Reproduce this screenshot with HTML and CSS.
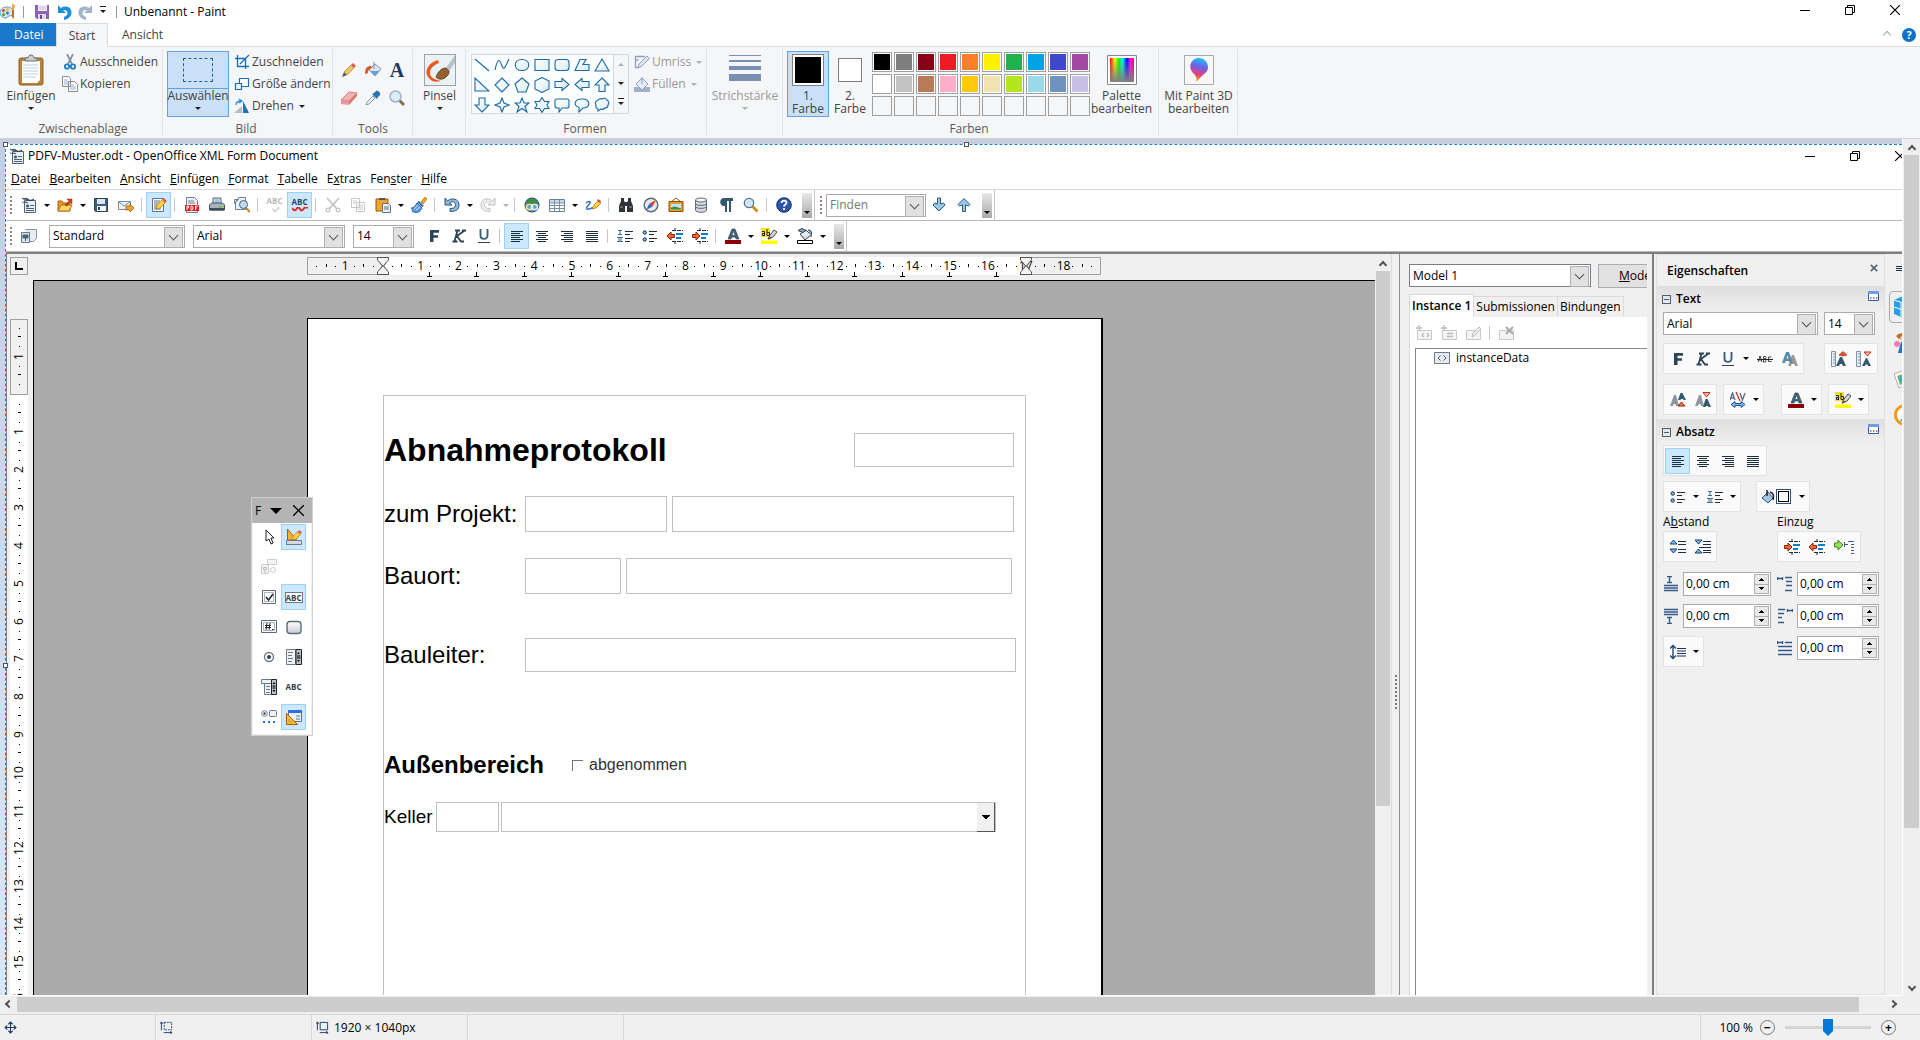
FILE: index.html
```html
<!DOCTYPE html>
<html lang="de">
<head>
  <meta charset="UTF-8">
  <meta name="viewport" content="width=device-width, initial-scale=1.0">
  <title>Unbenannt - Paint</title>
  <link rel="stylesheet" href="styles.css">
</head>
<body>
  <!-- Icon sprite -->
  <svg class="sprite" aria-hidden="true">
    <defs>
      <linearGradient id="gGrey" x1="0" y1="0" x2="0" y2="1"><stop offset="0" stop-color="#fff"/><stop offset="1" stop-color="#c5cdd6"/></linearGradient>
      <linearGradient id="gShape" x1="0" y1="0" x2="1" y2="1"><stop offset="0" stop-color="#fff"/><stop offset="1" stop-color="#d9edf2"/></linearGradient>
      <linearGradient id="gRainbow"><stop offset="0" stop-color="#f00"/><stop offset=".2" stop-color="#ff0"/><stop offset=".38" stop-color="#0f0"/><stop offset=".52" stop-color="#0ff"/><stop offset=".7" stop-color="#00f"/><stop offset=".86" stop-color="#f0f"/><stop offset="1" stop-color="#f03"/></linearGradient>
      <linearGradient id="gFade" x1="0" y1="0" x2="0" y2="1"><stop offset="0" stop-color="#808080" stop-opacity="0"/><stop offset="1" stop-color="#808080"/></linearGradient>
      <linearGradient id="gDrop" x1=".6" y1="0" x2=".4" y2="1"><stop offset="0" stop-color="#14c8f5"/><stop offset=".35" stop-color="#6b62e8"/><stop offset=".7" stop-color="#e8417c"/><stop offset="1" stop-color="#ffb400"/></linearGradient>
    </defs>
    <symbol id="palette" viewBox="0 0 16 16"><path d="M7 3C2 3 0 6 0 9s3 5 6 5c2 0 1-2 3-2 3 0 4-1 4-4S11 3 7 3z" fill="#cfe8f5" stroke="#5b9cbf"/><circle cx="3.500" cy="6.500" r="1.500" fill="#e33"/><circle cx="7.500" cy="5.500" r="1.500" fill="#fb0"/><circle cx="3.500" cy="10.500" r="1.500" fill="#3a3"/><circle cx="7.500" cy="9" r="1.500" fill="#27c"/><path d="M12 0l3 1-1 5h-2z" fill="#f4a23c"/><path d="M12 6h2v7l-1 2-1-2z" fill="#d06b1c"/></symbol>
    <symbol id="disk" viewBox="0 0 16 16"><path d="M1 1h14v14H3l-2-2z" fill="#8c62b8"/><path d="M4 1h9v6H4z" fill="#f7f2fb"/><path d="M5 3h7M5 5h7" stroke="#c9b5de"/><path d="M4 10h8v5H4z" fill="#ddd"/><path d="M6 11h2v4H6z" fill="#6b4496"/></symbol>
    <symbol id="undo" viewBox="0 0 16 16"><path d="M2 1v8h8L7.200 6.300C9.500 5.300 11.500 7 11.500 9c0 2-1.500 3-3.500 4v3c5-1 7.500-4 7.500-7.500 0-5.500-6-7.500-10.700-4.500z" fill="#1e90d8"/></symbol>
    <symbol id="redo" viewBox="0 0 16 16"><path d="M14 1v8H6l2.800-2.700C6.500 5.300 4.500 7 4.500 9c0 2 1.500 3 3.500 4v3C3 15 .5 12 .5 8.500.5 3 6.500 1 11.200 4z" fill="#a3b4cb"/></symbol>
    <symbol id="winMin" viewBox="0 0 10 10"><path d="M0 5.500h10" stroke="#000"/></symbol>
    <symbol id="winRestore" viewBox="0 0 10 10"><path d="M.5 2.500h7v7h-7zM2.500 2.500v-2h7v7h-2" fill="none" stroke="#000"/></symbol>
    <symbol id="winClose" viewBox="0 0 10 10"><path d="M0 0l10 10M10 0L0 10" stroke="currentColor" stroke-width="1.200"/></symbol>
    <symbol id="closeBold" viewBox="0 0 10 10"><path d="M1 1l8 8M9 1L1 9" stroke="#5a6a7c" stroke-width="2.200"/></symbol>
    <symbol id="paste" viewBox="0 0 26 32"><rect x="1" y="4" width="24" height="27" rx="2" fill="#b5823f" stroke="#8f6227"/><path d="M4 7h18v19l-3 3H4z" fill="#fff"/><path d="M5 11h15M5 14h15M5 17h15M5 20h15M5 23h13" stroke="#b9cfe4"/><path d="M7 7V4h3c0-4 6-4 6 0h3v3z" fill="#c9ccd0" stroke="#6d6d6d"/></symbol>
    <symbol id="scissors" viewBox="0 0 16 16"><path d="M5 0l5 10M11 0L6 10" stroke="#7d8ea0" stroke-width="1.700"/><circle cx="5" cy="12.500" r="2.200" fill="none" stroke="#1f7ec4" stroke-width="1.800"/><circle cx="11" cy="12.500" r="2.200" fill="none" stroke="#1f7ec4" stroke-width="1.800"/></symbol>
    <symbol id="pages" viewBox="0 0 16 16"><path d="M.5.500h6l2 2v8h-8zM6.500 5.500h6l3 3v7h-9z" fill="#fff" stroke="#8a8a8a"/><path d="M2 4h4M2 6h4M2 8h4M8 9h4M8 11h6M8 13h6" stroke="#8fb0d0"/></symbol>
    <symbol id="crop" viewBox="0 0 16 16"><path d="M3.500 1v11.500H15M1 4.500h10.500V15M6 10l9-9" fill="none" stroke="#1a6fb0" stroke-width="1.300"/></symbol>
    <symbol id="resize" viewBox="0 0 16 16"><path d="M5.500 2.500h9v8h-9z" fill="#fff" stroke="#1a6fb0" stroke-width="1.200"/><path d="M1.500 7.500h6v6h-6z" fill="#e8f3fa" stroke="#1a6fb0" stroke-width="1.200"/></symbol>
    <symbol id="rotate" viewBox="0 0 16 16"><path d="M0 15h8V8z" fill="#b8bcc0"/><path d="M9 15V3l6 12z" fill="#2072b4"/><path d="M2 7c0-3 2-4 5-4M5 1l3 2-3 2" fill="none" stroke="#2b8bd6" stroke-width="1.300"/></symbol>
    <symbol id="pencil" viewBox="0 0 16 16"><path d="M1 15l2-5 3 3z" fill="#555"/><path d="M3 10l7-7 3 3-7 7z" fill="#ecc668" stroke="#a87f2a" stroke-width=".7"/><path d="M10 3l2-2 3 3-2 2z" fill="#d9605a"/></symbol>
    <symbol id="bucket" viewBox="0 0 16 16"><path d="M4 8l6-6 6 5-6 7z" fill="#dbe8f3" stroke="#7c98b8"/><path d="M5.500 9h9L10 13.500z" fill="#5aa0dc"/><path d="M9 0v7" stroke="#888"/><path d="M6 4C2 4 0 6 0 12l3-1c0-3 1-4 4-5z" fill="#e8532a"/></symbol>
    <symbol id="eraser" viewBox="0 0 16 16"><path d="M0 10l8-8 8 1-8 8z" fill="#f4b1b1" stroke="#c36f6f" stroke-width=".8"/><path d="M0 10v4l8 1v-4z" fill="#e89595"/><path d="M8 11l8-8v3l-8 9z" fill="#d77777"/></symbol>
    <symbol id="dropper" viewBox="0 0 16 16"><path d="M1 15l1-3 6-6 2 2-6 6z" fill="#e5eef6" stroke="#8a98a8"/><path d="M7 4l5 5 1-2 2-2c1-2-2-5-4-4L9 3z" fill="#2672b4"/></symbol>
    <symbol id="lens" viewBox="0 0 16 16"><path d="M10 10l5 5" stroke="#8f6a4a" stroke-width="3"/><circle cx="6.500" cy="6.500" r="5.500" fill="#dcedfa" stroke="#9cb3c9" stroke-width="1.500"/></symbol>
    <symbol id="brush" viewBox="0 0 32 32"><rect x=".5" y=".5" width="31" height="31" fill="#e8f3f6" stroke="#a0a0a0"/><path d="M14 6C4 9 0 17 4 23s9 5 13 4c-5-1-11-3-11-8s4-8 9-10z" fill="#ee5a24"/><path d="M31 1l-9 13 3 3 6-8z" fill="#b9c3cd"/><path d="M22 14c-5 0-8 4-10 9 2 3 8 3 11-1 2-2 2-3 2-5z" fill="#94622f" stroke="#6e4620"/></symbol>
    <symbol id="outline" viewBox="0 0 16 16"><path d="M11 2.500H1.500v11h3M1.500 6l3 0" fill="none" stroke="#8ea0be" stroke-width="1.300"/><path d="M4 14l1-4 8-8 2.500 2.500-8 8z" fill="#dde4ef" stroke="#8ea0be"/></symbol>
    <symbol id="fill" viewBox="0 0 16 16"><path d="M0 11h16v5H0z" fill="#a0b0cb"/><path d="M2 8l6-6 6 6-6 6z" fill="#e5eaf3" stroke="#8ea0be"/><path d="M8 1v7" stroke="#8ea0be"/></symbol>
    <symbol id="rainbow" viewBox="0 0 30 30"><path d="M.5.500h29v29H.500z" fill="#fff" stroke="#888"/><path d="M3 3h24v24H3z" fill="url(#gRainbow)"/><path d="M3 3h24v24H3z" fill="url(#gFade)"/></symbol>
    <symbol id="paint3d" viewBox="0 0 30 30"><path d="M.5.500h29v29H.500z" fill="#f7f7f7" stroke="#aaa"/><path d="M15 3c5 0 9 4 9 9 0 6-5 7-8 11l-4 4c1-4 0-6-3-9-6-7-1-15 6-15z" fill="url(#gDrop)"/></symbol>
    <symbol id="move" viewBox="0 0 12 12"><path d="M6 1v10M1 6h10M4 3l2-2 2 2M4 9l2 2 2-2M3 4L1 6l2 2M9 4l2 2-2 2" fill="none" stroke="#1d3c66"/></symbol>
    <symbol id="selSize" viewBox="0 0 14 14"><path d="M4.500 1.500h8v8h-8z" fill="none" stroke="#1d3c66" stroke-dasharray="2 1"/><path d="M1.500 10V1M0 3l1.500-2L3 3M4 12.500h9M11 11l2 1.500-2 1.500" fill="none" stroke="#1d3c66"/></symbol>
    <symbol id="imgSize" viewBox="0 0 14 14"><path d="M4.500 1.500h8v8h-8z" fill="#e8f3fa" stroke="#1d3c66"/><path d="M1.500 10V1M0 3l1.500-2L3 3M4 12.500h9M11 11l2 1.500-2 1.500" fill="none" stroke="#1d3c66"/></symbol>

    <!-- Writer -->
    <symbol id="xdoc" viewBox="0 0 16 16"><path d="M3.500 3.500h11v12h-11z" fill="#e9f0f5" stroke="#4c6377"/><path d="M1 1c2 2 4-1 6 1s4 1 6 0c-2 2-4 2-6 1S3 3 1 1zM1 5c2 1 4-1 6 1" fill="#2d4454" stroke="#2d4454" stroke-width=".8"/><path d="M5.500 8h2v2h-2zM9 8.500h4M5 11.500h8M5 13.500h8" fill="#4c6377" stroke="#4c6377"/></symbol>
    <symbol id="open" viewBox="0 0 16 16"><path d="M1 14V4h4l1 2h7v8z" fill="#e8972a" stroke="#a85e10"/><path d="M1 14l3-6h11l-3 6z" fill="#ffd566" stroke="#b8720e"/><path d="M8 8l4-4-2-2h5v5l-2-2-3 4z" fill="#d8401c" stroke="#8e2108" stroke-width=".5"/></symbol>
    <symbol id="save" viewBox="0 0 16 16"><path d="M1.500 1.500h13v13h-12l-1-1z" fill="#3e5f80" stroke="#2d4454"/><path d="M4 2h8v5H4z" fill="#d7e6f2"/><path d="M4 9h9v5H4z" fill="#f4f8fb"/><path d="M5 10h2v3H5z" fill="#2d4454"/></symbol>
    <symbol id="mail" viewBox="0 0 16 16"><path d="M.5 4.500h12v8H.500z" fill="#e8eff5" stroke="#7b8b9a"/><path d="M1 5l5 4 6-4" fill="none" stroke="#7b8b9a"/><path d="M8 9h4V7l4 4-4 4v-2H8z" fill="#f4a524" stroke="#8d5108" stroke-width=".7"/></symbol>
    <symbol id="edit" viewBox="0 0 16 16"><path d="M1.500 1.500h11v13h-11z" fill="#f8fafc" stroke="#5c7388"/><path d="M3 4h6M3 6h5M3 8h4M3 10h3M3 12h7" stroke="#5c7388"/><path d="M5 12l1-4 6-6 3 3-6 6z" fill="#ffd23f" stroke="#a56a08" stroke-width=".7"/><path d="M11 3l2-2 3 3-2 2z" fill="#e45c5c"/></symbol>
    <symbol id="pdf" viewBox="0 0 16 16"><path d="M2.500.500h8l3 3v12h-11z" fill="#eef3f7" stroke="#6c8193"/><path d="M4 4h6M4 6h7" stroke="#6c8193"/><path d="M1 8h14v6H1z" fill="#e01f1f"/><path d="M3 13V9h1.500v2H3M7 9v4h1l1-1v-2L8 9zM11.500 13V9H14M11.500 11H13" fill="none" stroke="#fff" stroke-width=".9"/></symbol>
    <symbol id="print" viewBox="0 0 16 16"><path d="M4 7V1h8v6" fill="#e7f1f8" stroke="#4c6377"/><path d="M5.500 3h5M5.500 5h5" stroke="#6b94b8"/><path d="M.5 8l2-2h11l2 2v5H.500z" fill="#a8b3bd" stroke="#3f4f5c"/><path d="M1 11h14v2.500H1z" fill="#3f4f5c"/><path d="M10 10h3" stroke="#56d22e" stroke-width="1.500"/></symbol>
    <symbol id="preview" viewBox="0 0 16 16"><path d="M.5 2.500h4l-4 4zM4.500.500h7v12h-10v-7z" fill="#eaf1f7" stroke="#6c8193"/><path d="M12 11l4 4" stroke="#c8821a" stroke-width="2.200"/><circle cx="9.500" cy="7.500" r="4" fill="#bfdcf2" stroke="#4c6377"/></symbol>
    <symbol id="spell" viewBox="0 0 16 16"><path d="M4 9l4 5 7-7" fill="none" stroke="#bbb" stroke-width="2.400"/><path d="M4 9l4 5 7-7" fill="none" stroke="#fff"/></symbol>
    <symbol id="wave" viewBox="0 0 16 5"><path d="M0 1q2.500 4 4.500 1t3.500 0 3.500 0T16 1" fill="none" stroke="#dd2b20" stroke-width="2"/></symbol>
    <symbol id="cutGrey" viewBox="0 0 16 16"><path d="M2 1l10 11M14 1L4 12" stroke="#c4c4c4" stroke-width="1.800"/><circle cx="3" cy="13" r="1.800" fill="none" stroke="#c4c4c4" stroke-width="1.300"/><circle cx="13" cy="13" r="1.800" fill="none" stroke="#c4c4c4" stroke-width="1.300"/></symbol>
    <symbol id="copyGrey" viewBox="0 0 16 16"><path d="M1.500 1.500h8v9h-8zM6.500 5.500h8v9h-8z" fill="#fff" stroke="#c8c8c8"/><path d="M3 4h4M3 6h3M8 8h5M8 10h5M8 12h5" stroke="#c8c8c8"/></symbol>
    <symbol id="clip" viewBox="0 0 16 16"><path d="M1 2h12v12H1z" fill="#f0a530" stroke="#8d5a10"/><path d="M4 3V1h6v2z" fill="#555"/><path d="M7.500 6.500h6l2 2v7h-8z" fill="#eaf1f7" stroke="#5c7388"/><path d="M9 10h5M9 12h5" stroke="#5c7388"/></symbol>
    <symbol id="format" viewBox="0 0 16 16"><path d="M10 5l4-5 2 2-4 5z" fill="#f4a524" stroke="#8d5108" stroke-width=".6"/><path d="M6 6l5 5-2 3c-2 2-6 2-8 0l1-2-2-1c3 0 4-2 6-5z" fill="#5d9ee6" stroke="#1f4f96" stroke-width=".8"/><path d="M7 4.500l5 5" stroke="#2f64a8" stroke-width="2"/><path d="M3 12l4-4M5 13l4-3" stroke="#cfe3fa" stroke-width=".8"/></symbol>
    <symbol id="undoO" viewBox="0 0 16 16"><path d="M1 1v7h7L5.500 6C8 3.500 12 5 11.500 8.500 11 11 9 11.500 6 11.500v3c6 0 9-2 9-6.500C15 2 8 0 3.500 4z" fill="#8fbcdc" stroke="#2b5478"/></symbol>
    <symbol id="redoO" viewBox="0 0 16 16"><path d="M15 1v7H8l2.500-2C8 3.500 4 5 4.500 8.500 5 11 7 11.500 10 11.500v3C4 14.500 1 12.500 1 8 1 2 8 0 12.500 4z" fill="#eee" stroke="#c4c4c4"/></symbol>
    <symbol id="globe" viewBox="0 0 16 16"><circle cx="8" cy="8" r="7" fill="#5b9fd8" stroke="#1d3d5c"/><path d="M3 3q5-3 10 0l1 5-6 1-6-1z" fill="#3f8a4a"/><rect x="2.500" y="7.500" width="6" height="5" rx="2.500" fill="none" stroke="#f4e27a" stroke-width="1.600"/><rect x="7.500" y="7.500" width="6" height="5" rx="2.500" fill="none" stroke="#e8f0f5" stroke-width="1.600"/></symbol>
    <symbol id="table" viewBox="0 0 16 16"><path d="M.5 2.500h15v12H.500z" fill="#fff" stroke="#6c8193"/><path d="M1 3h14v3H1z" fill="#c6d9ea"/><path d="M.5 6h15M.5 8.500h15M.5 11.500h15M5.500 3v11M10.500 3v11" stroke="#7690a8"/></symbol>
    <symbol id="draw" viewBox="0 0 16 16"><path d="M1 6c2-2 5-2 4 0s-5 5-3 6 5-2 7-1" fill="none" stroke="#2874d0" stroke-width="1.500"/><path d="M7 12l2-4 4-4 3 2-5 5z" fill="#ffd23f" stroke="#a56a08" stroke-width=".7"/><path d="M12 4l1-2 3 2-1 2z" fill="#e04a3a"/></symbol>
    <symbol id="find" viewBox="0 0 16 16"><path d="M3 1h3v3l1 1h2l1-1V1h3v3l2 5v6H9V9H7v6H1V9l2-5z" fill="#2e3439"/><path d="M2 10h3M11 10h3" stroke="#99a"/></symbol>
    <symbol id="compass" viewBox="0 0 16 16"><circle cx="8" cy="8" r="6.800" fill="#e5eef5" stroke="#5c6c7a" stroke-width="1.500"/><path d="M13 3L9.500 9.500l-3-3z" fill="#e23b1e"/><path d="M3 13l3.500-6.500 3 3z" fill="#2f64c0"/></symbol>
    <symbol id="gallery" viewBox="0 0 16 16"><path d="M3 5l5-4 5 4" fill="none" stroke="#8d5a10"/><path d="M1 4.500h14v10H1z" fill="#e79a2e" stroke="#8d4a08"/><path d="M3 7h10v5.500H3z" fill="#bfe3f7"/><path d="M3 12.500v-2l4-1 6 2v1z" fill="#3c9132"/></symbol>
    <symbol id="db" viewBox="0 0 16 16"><path d="M2.500 3v10c0 3 11 3 11 0V3" fill="#d6dbe0" stroke="#5f6b76"/><ellipse cx="8" cy="3" rx="5.500" ry="2" fill="#f3f5f7" stroke="#5f6b76"/><path d="M2.500 6.500c0 2.500 11 2.500 11 0M2.500 9.500c0 2.500 11 2.500 11 0" fill="none" stroke="#5f6b76"/></symbol>
    <symbol id="pilcrow" viewBox="0 0 16 16"><path d="M15 1H6C1 1 1 9 6 9h1v6h2V4h2v11h2V4h2z" fill="#34586f"/></symbol>
    <symbol id="zoomO" viewBox="0 0 16 16"><path d="M9.500 9.500l5 5" stroke="#d48a1d" stroke-width="2.800"/><circle cx="6" cy="6" r="4.700" fill="#cfe6f7" stroke="#54728c" stroke-width="1.300"/></symbol>
    <symbol id="help" viewBox="0 0 16 16"><circle cx="8" cy="8" r="7.300" fill="#2c56a8" stroke="#16306b"/><path d="M5.500 6c0-3.500 5.500-3 5 0C10.300 7.500 8 7.500 8 9.500M8 11v2" fill="none" stroke="#fff" stroke-width="1.800"/></symbol>
    <symbol id="down" viewBox="0 0 14 16"><path d="M5.500 1h3v6l3-1 1.500 2-6 6-6-6L2.500 6l3 1z" fill="#9cc8e8" stroke="#2d5878"/></symbol>
    <symbol id="up" viewBox="0 0 14 16"><path d="M5.500 14.500h3V8l3 1L13 7.500l-6-6-6 6L2.500 9l3-1z" fill="#9cc8e8" stroke="#2d5878"/></symbol>
    <symbol id="styles" viewBox="0 0 16 16"><path d="M4.500 1.500h11v9l-3 3h-4" fill="#e6ebf0" stroke="#8793a0"/><path d="M.5 4.500h8v10h-8z" fill="#dbe4ec" stroke="#66788a"/><path d="M2 7h5v3H2zM4.500 9v4" fill="#4c6377" stroke="#4c6377"/></symbol>
    <symbol id="bold" viewBox="0 0 16 16"><path d="M4 2h9v2.700H7.500v2.500h4.500v2.600H7.500V14H4z" fill="#2d4454"/></symbol>
    <symbol id="italic" viewBox="0 0 16 16"><path d="M4 2.500h5M6.500 2.500L3.500 13.500M1.500 13.500h5M13.500 2.500L6 8l4 5.500h3M11 2.500h4" fill="none" stroke="#2d4454" stroke-width="1.800"/></symbol>
    <symbol id="under" viewBox="0 0 16 16"><path d="M4.500 1v6.500c0 4.500 7 4.500 7 0V1" fill="none" stroke="#3d6079" stroke-width="1.900"/><path d="M2 14.500h12" stroke="#2d4454"/></symbol>
    <symbol id="alLeft" viewBox="0 0 16 16"><path d="M2 3.500h12M2 5.500h9M2 7.500h12M2 9.500h9M2 11.500h12M2 13.500h9" stroke="#1c2f3d"/></symbol>
    <symbol id="alCenter" viewBox="0 0 16 16"><path d="M2 3.500h12M4 5.500h8M2 7.500h12M4 9.500h8M2 11.500h12M4 13.500h8" stroke="#1c2f3d"/></symbol>
    <symbol id="alRight" viewBox="0 0 16 16"><path d="M2 3.500h12M5 5.500h9M2 7.500h12M5 9.500h9M2 11.500h12M5 13.500h9" stroke="#1c2f3d"/></symbol>
    <symbol id="alFull" viewBox="0 0 16 16"><path d="M2 3.500h12M2 5.500h12M2 7.500h12M2 9.500h12M2 11.500h12M2 13.500h12" stroke="#1c2f3d"/></symbol>
    <symbol id="numList" viewBox="0 0 16 16"><path d="M1 2.500h4M3 2v4M1 6.500h4M0 9.500h6M0 13.500h6M2 10v3M4 10v3" stroke="#3d7090"/><path d="M8 3.500h8M8 6.500h5M8 10.500h8M8 13.500h5" stroke="#1c2f3d"/></symbol>
    <symbol id="bulList" viewBox="0 0 16 16"><circle cx="2.700" cy="4.500" r="1.700" fill="#7db6dc" stroke="#1c2f3d"/><circle cx="2.700" cy="11.500" r="1.700" fill="#7db6dc" stroke="#1c2f3d"/><path d="M7 3.500h8M7 6.500h5M7 10.500h8M7 13.500h5" stroke="#1c2f3d"/></symbol>
    <symbol id="outdent" viewBox="0 0 16 16"><path d="M5 2.500h11M8 0v3M8 13v3M5 13.500h11" stroke="#1c2f3d" stroke-dasharray="4 1"/><path d="M9 6h7M9 10h5" stroke="#0b7cc8" stroke-width="2"/><path d="M0 8l4-4v2.500h3.500v3H4V12z" fill="#f0693a" stroke="#8e2108"/></symbol>
    <symbol id="indent" viewBox="0 0 16 16"><path d="M5 2.500h11M8 0v3M8 13v3M5 13.500h11" stroke="#1c2f3d" stroke-dasharray="4 1"/><path d="M9 6h7M9 10h5" stroke="#0b7cc8" stroke-width="2"/><path d="M8 8L4 4v2.500H.5v3H4V12z" fill="#f0693a" stroke="#8e2108"/></symbol>
    <symbol id="fontColor" viewBox="0 0 16 16"><path d="M3 11L7 1h3l4 10h-3l-.6-2H6.800L6 11z" fill="#41647d" stroke="#22394a" stroke-width=".6"/><path d="M7.500 7L8.500 4l1 3z" fill="#fff"/><path d="M0 12h16v4H0z" fill="#8b0000"/></symbol>
    <symbol id="marker" viewBox="0 0 16 16"><path d="M0 0h9v9H0z" fill="#ffe11a"/><path d="M0 12.500h16V16H0z" fill="#ff0"/><path d="M1 3.500h2.500V8M3.500 5.500H1.500V7.500h2M6 1v6.500h2.500v-3H6" fill="none" stroke="#222"/><path d="M7 11l2-4 4-5 3 2-4 5z" fill="#d5d9dd" stroke="#444"/><path d="M7 12l1.500-3.500L11 10z" fill="#7b5c1a"/></symbol>
    <symbol id="bgColor" viewBox="0 0 16 16"><path d="M3 6l6-4 5 5-6 5z" fill="url(#gGrey)" stroke="#2f4250"/><path d="M11 2c4 0 4 3 3 7M1 2.500l4-2 4 2-3 2z" fill="#9aa7b2" stroke="#2f4250"/><path d="M.5 12.500h15v3H.500z" fill="#fff" stroke="#000"/></symbol>
    <symbol id="strike" viewBox="0 0 16 16"><path d="M1 11l2-6 2 6M2 9h2M6.500 5.500h2l.5 1-.5 1.500H6.500h2L9 9.500l-.5 1.500h-2zM14.500 6h-3v4.500h3" fill="none" stroke="#444"/><path d="M0 8.500h16" stroke="#222"/></symbol>
    <symbol id="shadow" viewBox="0 0 16 16"><path d="M6 15l4-11h2l4 11h-3l-.5-2h-3l-.5 2z" fill="#9a9a9a"/><path d="M0 12L4 1h3l4 11H8l-.6-2H3.600L3 12z" fill="#5c8aaa"/><path d="M4.500 7.500l1-3 1 3z" fill="#fff"/></symbol>
    <symbol id="grow" viewBox="0 0 16 16"><path d="M.5.500h4v15h-4zM2 3h2M2 6h2M2 9h2M2 12h2" fill="#e9eff4" stroke="#7c92a6"/><path d="M5 15l4-9h2l4 9h-3l-1-2H9l-1 2z" fill="#34586f"/><path d="M8 4l4-3.500L16 4l-4 1z" fill="#f05030" stroke="#8e2108" stroke-width=".6"/></symbol>
    <symbol id="shrink" viewBox="0 0 16 16"><path d="M.5.500h4v15h-4zM2 3h2M2 6h2M2 9h2M2 12h2" fill="#e9eff4" stroke="#7c92a6"/><path d="M6 15l4-8h1l4 8h-3l-.5-1.500h-2L9 15z" fill="#34586f"/><path d="M8 1h7l-3.500 4z" fill="#fbb" stroke="#c03010"/></symbol>
    <symbol id="super" viewBox="0 0 16 16"><path d="M0 14L4 3h2l3 11H6l-.5-2h-2L3 14z" fill="#8e979f"/><path d="M8 8l2.500-7h2L16 8h-2.500l-.5-1h-2l-.5 1z" fill="#34586f"/><path d="M8 14l3.500-4 3.500 4z" fill="#f08050" stroke="#8e2108"/></symbol>
    <symbol id="sub" viewBox="0 0 16 16"><path d="M0 14L4 3h2l3 11H6l-.5-2h-2L3 14z" fill="#8e979f"/><path d="M8 15l2.500-8h2l3.500 8h-2.500l-.5-1h-2l-.5 1z" fill="#34586f"/><path d="M8 .5h7L11.500 5z" fill="#fbb" stroke="#c03010"/></symbol>
    <symbol id="spacing" viewBox="0 0 16 16"><path d="M0 8l2.500-7L5 8M1 6h3M10 1l2.500 7L15 1" fill="none" stroke="#5c7388" stroke-width="1.400"/><path d="M6 0l4 9" stroke="#d22" stroke-width="1.200"/><path d="M1 12.500l4-3v2h6v-2l4 3-4 3v-2H5v2z" fill="#7db6ec" stroke="#1f5a96"/></symbol>
    <symbol id="dialog" viewBox="0 0 11 10"><path d="M.5.500h10v9H.500z" fill="#fff" stroke="#2a5db0"/><path d="M0 0h11v3H0z" fill="#6f9be0"/><path d="M2 7h1.500M5 7h1.500M8 7h1.500" stroke="#222"/></symbol>
    <symbol id="spaceUp" viewBox="0 0 16 16"><path d="M0 5l3.500-4L7 5zM0 10h7l-3.500 4z" fill="#7db6ec" stroke="#1c3f66"/><path d="M8 2.500h8M8 5.500h8M8 10.500h8M8 13.500h8" stroke="#1c2f3d"/></symbol>
    <symbol id="spaceDown" viewBox="0 0 16 16"><path d="M0 1h7L3.500 5zM0 14l3.500-4L7 14z" fill="#7db6ec" stroke="#1c3f66"/><path d="M8 2.500h8M8 5.500h8M4 8.500h12M8 11.500h8M8 13.500h8" stroke="#1c2f3d"/></symbol>
    <symbol id="hanging" viewBox="0 0 20 16"><path d="M.5 4H4V1l5 5-5 5V8H.500z" fill="#9be05a" stroke="#3c8a1a"/><path d="M10 5.500h4M10.500 3v5M14 2.500h6M17 5.500h3M17 8.500h3M17 11.500h3M17 14.500h3" stroke="#3d5a8a"/></symbol>
    <symbol id="above" viewBox="0 0 16 16"><path d="M4 .5h5M6.500 0v6M4 6.500h5M1 9.500h14M1 12h14M1 14.500h14" stroke="#36598a" stroke-width="1.400"/></symbol>
    <symbol id="below" viewBox="0 0 16 16"><path d="M1 1.500h14M1 4h14M1 6.500h14M4 9.500h5M6.500 9v6M4 15.500h5" stroke="#36598a" stroke-width="1.400"/></symbol>
    <symbol id="before" viewBox="0 0 16 16"><path d="M0 2.500h6M.5 1v3M5.500 1v3M8 1.500h7M9 5.500h6M9 9.500h6M8 14.500h7" stroke="#36598a" stroke-width="1.400"/></symbol>
    <symbol id="after" viewBox="0 0 16 16"><path d="M10 2.500h6M10.500 1v3M15.500 1v3M1 1.500h7M1 5.500h6M1 9.500h4M1 14.500h6" stroke="#36598a" stroke-width="1.400"/></symbol>
    <symbol id="first" viewBox="0 0 16 16"><path d="M0 2.500h5M.5 1v3M5.500 1v3M8 2.500h7M1 6.500h14M1 10.500h14M1 14.500h14" stroke="#36598a" stroke-width="1.400"/></symbol>
    <symbol id="lineSp" viewBox="0 0 16 16"><path d="M3 2v12M0 4.500l3-3 3 3M0 11.500l3 3 3-3" fill="none" stroke="#25486e" stroke-width="1.400"/><path d="M7 4.500h9M7 7h9M7 9.500h9M7 12h9" stroke="#1c2f5d"/></symbol>
    <symbol id="bucketO" viewBox="0 0 14 16"><path d="M1 9l6-6 5 6-5 5z" fill="#a6c4e6" stroke="#33547a"/><path d="M9 3c4 1 4 5 3 8M6 1v6" fill="none" stroke="#222" stroke-width="1.500"/></symbol>
    <symbol id="xmlTag" viewBox="0 0 16 12"><path d="M.5.500h15v11H.500z" fill="#e5ebf0" stroke="#6c7a88"/><path d="M6.500 3.500L4 6l2.500 2.500M9.500 3.500L12 6 9.500 8.500" fill="none" stroke="#4c5a68"/></symbol>
    <symbol id="addElem" viewBox="0 0 16 16"><path d="M1.500 5.500h14v9h-14z" fill="#f4f4f4" stroke="#c8c8c8"/><path d="M3 0v6M0 3h6M8 8l-2 2 2 2M11 8l2 2-2 2" fill="none" stroke="#bbb" stroke-width="1.300"/></symbol>
    <symbol id="addAttr" viewBox="0 0 16 16"><path d="M1.500 5.500h14v9h-14z" fill="#f4f4f4" stroke="#c8c8c8"/><path d="M3 0v6M0 3h6M6 8.500h6M6 11.500h6" stroke="#bbb" stroke-width="1.300"/></symbol>
    <symbol id="editGrey" viewBox="0 0 16 16"><path d="M.5 5.500h14v9H.500z" fill="#f4f4f4" stroke="#c8c8c8"/><path d="M6 12l1-4 6-6 2 2-6 6z" fill="#eee" stroke="#bbb"/></symbol>
    <symbol id="delGrey" viewBox="0 0 16 16"><path d="M.5 5.500h14v9H.500z" fill="#f4f4f4" stroke="#c8c8c8"/><path d="M7 2l7 7M14 2L7 9" stroke="#aaa" stroke-width="2"/></symbol>
    <symbol id="cube" viewBox="0 0 20 24"><path d="M0 5l9-4 10 4v14l-10 4-9-4z" fill="#2a9df0"/><path d="M7 12l12 3v4l-10 4-2-1z" fill="#59c832"/><path d="M0 12l9 3M7 8v14M0 5l9 3" stroke="#fff"/></symbol>
    <symbol id="person" viewBox="0 0 20 24"><path d="M2 5q6-6 12 0l-1 3H5z" fill="#c66a22"/><circle cx="9" cy="8" r="3" fill="#fbd3b0"/><path d="M4 22l3-11h6l3 11z" fill="#2470c8"/><circle cx="3" cy="13" r="3" fill="#f57ab8"/></symbol>
    <symbol id="photos" viewBox="0 0 20 24"><path d="M0 7l13-5 5 14-13 5z" fill="#fff" stroke="#aaa"/><path d="M3 9l9-3 3 9-9 3z" fill="#6cc24a"/><circle cx="9" cy="12" r="4" fill="#4aa3e0"/></symbol>
    <symbol id="navi" viewBox="0 0 20 24"><circle cx="11" cy="12" r="9.500" fill="#fff" stroke="#f29a1f" stroke-width="3"/><path d="M16 5l-2 11-9 3z" fill="#4a8fd8"/></symbol>

    <!-- Form controls palette -->
    <symbol id="cursor" viewBox="0 0 16 16"><path d="M5 1v11l3-2 2 5 2-1-2-5h3z" fill="#fff" stroke="#222"/></symbol>
    <symbol id="design" viewBox="0 0 16 16"><path d="M1.500 0l9 11h-9z" fill="#f9b233" stroke="#a35f08"/><path d="M.5 11.500h15v4H.500z" fill="#d5dae0" stroke="#6c7a88"/><path d="M5.500 11l2-4 4-4 3 2-4 5z" fill="#ffd23f" stroke="#a56a08" stroke-width=".7"/><path d="M11.500 3l1.500-2 3 2-1.500 2z" fill="#e45c5c"/></symbol>
    <symbol id="ctlGrey" viewBox="0 0 16 16"><path d="M6.500.500h9v5h-9zM.5 5.500h7v9h-7z" fill="#f4f4f4" stroke="#ccc"/><path d="M2.500 8.500h3v2h-3zM4 11v3" fill="none" stroke="#bbb"/><circle cx="12" cy="11" r="2.500" fill="none" stroke="#ccc"/></symbol>
    <symbol id="check" viewBox="0 0 16 16"><path d="M1.500 1.500h13v13h-13z" fill="#fff" stroke="#5c6c7a"/><path d="M3.500 3.500h9v9h-9z" fill="#fff" stroke="#a9b4bf"/><path d="M5 8l2.500 3L12 5" fill="none" stroke="#222" stroke-width="1.500"/></symbol>
    <symbol id="numField" viewBox="0 0 16 16"><path d="M.5 1.500h15v12H.500z" fill="#fff" stroke="#5c6c7a"/><path d="M2.500 3.500h11v8h-11z" fill="#fff" stroke="#a9b4bf"/><path d="M6 4l-1 7M9 4L8 11M4 6.500h6M4 8.500h6M11 10.500h1.500" stroke="#222"/></symbol>
    <symbol id="btn" viewBox="0 0 16 16"><rect x="1" y="2.500" width="14" height="12" rx="3" fill="url(#gGrey)" stroke="#5c6c7a" stroke-width="1.400"/></symbol>
    <symbol id="radio" viewBox="0 0 16 16"><circle cx="8" cy="8" r="4.500" fill="#fff" stroke="#6c7a88" stroke-width="1.400"/><circle cx="8" cy="8" r="2" fill="#2d4454"/></symbol>
    <symbol id="listBox" viewBox="0 0 16 16"><path d="M.5.500h9v15h-9z" fill="#eef2f5" stroke="#6c7a88"/><path d="M2 3.500h5M2 6.500h4M2 9.500h5M2 12.500h4" stroke="#6c7a88"/><path d="M10 .5h5.500v15H10z" fill="#bbc3cb" stroke="#222"/><path d="M11 5l1.500-2L14 5zM11 11l1.500 2 1.500-2z"/><path d="M11 6h3.500v4H11z" fill="#555"/></symbol>
    <symbol id="comboBox" viewBox="0 0 16 16"><path d="M.5.500h10v4H.500zM3.500 4.500h8v11h-8z" fill="#eef2f5" stroke="#6c7a88"/><path d="M5 7.500h4M5 10.500h4M5 13.500h4" stroke="#6c7a88"/><path d="M10.500.500h5v15h-5z" fill="#bbc3cb" stroke="#222"/><path d="M11.500 5L13 3l1.500 2zM11.500 11l1.500 2 1.500-2z"/><path d="M11.500 6h3v4h-3z" fill="#555"/></symbol>
    <symbol id="moreCtl" viewBox="0 0 16 16"><circle cx="3.500" cy="4.500" r="2.800" fill="#fff" stroke="#6c7a88"/><circle cx="3.500" cy="4.500" r="1.200" fill="#2d4454"/><rect x="8.500" y="1.500" width="7" height="6" rx="1" fill="#eef2f5" stroke="#6c7a88"/><path d="M2 13h2M7 13h2M12 13h2" stroke="#2a6cf0" stroke-width="2"/></symbol>
    <symbol id="formDesign" viewBox="0 0 16 16"><path d="M2.500 1.500h13v11h-13z" fill="#eaf1f7" stroke="#5c7388"/><path d="M2 1h14v3H2z" fill="#2f6fe0"/><path d="M10 7h4M10 10h4" stroke="#5c7388"/><path d="M.5 4.500l11 11H.500z" fill="#ffc02e" stroke="#a35f08"/><path d="M3 10.500l2.500 2.500H3z" fill="#fff" stroke="#a35f08" stroke-width=".6"/></symbol>
  </svg>

  <div class="paint">
    <header class="titlebar">
      <svg class="icon"><use href="#palette"/></svg>
      <span class="tsep"></span>
      <button title="Speichern"><svg class="icon"><use href="#disk"/></svg></button>
      <button title="Rückgängig"><svg class="icon"><use href="#undo"/></svg></button>
      <button title="Wiederholen"><svg class="icon"><use href="#redo"/></svg></button>
      <button class="customize" title="Symbolleiste anpassen"><span class="caret"></span></button>
      <span class="tsep"></span>
      <h1>Unbenannt - Paint</h1>
      <div class="winbuttons">
        <button title="Minimieren"><svg><use href="#winMin"/></svg></button>
        <button title="Verkleinern"><svg><use href="#winRestore"/></svg></button>
        <button title="Schließen"><svg><use href="#winClose"/></svg></button>
      </div>
    </header>

    <nav class="tabs">
      <button class="tab file">Datei</button>
      <button class="tab current">Start</button>
      <button class="tab">Ansicht</button>
      <div class="tabs-right">
        <span class="chev up"></span>
        <button class="helpbtn" title="Hilfe">?</button>
      </div>
    </nav>

    <section class="ribbon">
      <div class="group clipboard">
        <div class="group-body">
          <button class="big"><svg class="paste-icon"><use href="#paste"/></svg><span>Einfügen</span><i class="caret"></i></button>
          <div class="stack">
            <button class="small"><svg class="icon"><use href="#scissors"/></svg>Ausschneiden</button>
            <button class="small"><svg class="icon"><use href="#pages"/></svg>Kopieren</button>
          </div>
        </div>
        <div class="group-name">Zwischenablage</div>
      </div>

      <div class="group image">
        <div class="group-body">
          <button class="big selected split"><span class="marquee"></span><span>Auswählen</span><i class="caret"></i></button>
          <div class="stack">
            <button class="small"><svg class="icon"><use href="#crop"/></svg>Zuschneiden</button>
            <button class="small"><svg class="icon"><use href="#resize"/></svg>Größe ändern</button>
            <button class="small"><svg class="icon"><use href="#rotate"/></svg>Drehen <i class="caret"></i></button>
          </div>
        </div>
        <div class="group-name">Bild</div>
      </div>

      <div class="group tools">
        <div class="tool-grid">
          <button title="Stift"><svg class="icon"><use href="#pencil"/></svg></button>
          <button title="Füllung"><svg class="icon"><use href="#bucket"/></svg></button>
          <button title="Text" class="letter">A</button>
          <button title="Radierer"><svg class="icon"><use href="#eraser"/></svg></button>
          <button title="Farbauswahl"><svg class="icon"><use href="#dropper"/></svg></button>
          <button title="Lupe"><svg class="icon"><use href="#lens"/></svg></button>
        </div>
        <div class="group-name">Tools</div>
      </div>

      <div class="group brushes">
        <div class="group-body">
          <button class="big"><svg class="big-icon"><use href="#brush"/></svg><span>Pinsel</span><i class="caret"></i></button>
        </div>
      </div>

      <div class="group shapes">
        <div class="group-body">
          <div class="gallery">
            <div class="shape-grid" id="shapeGrid"></div>
            <div class="gallery-scroll">
              <button title="Nach oben"><i class="caret flip dim"></i></button>
              <button title="Nach unten"><i class="caret"></i></button>
              <button title="Mehr"><i class="caret bar"></i></button>
            </div>
          </div>
          <div class="stack">
            <button class="small disabled"><svg class="icon"><use href="#outline"/></svg>Umriss <i class="caret dim"></i></button>
            <button class="small disabled"><svg class="icon"><use href="#fill"/></svg>Füllen <i class="caret dim"></i></button>
          </div>
        </div>
        <div class="group-name">Formen</div>
      </div>

      <div class="group stroke">
        <div class="group-body">
          <button class="big disabled"><span class="lines"><i></i><i></i><i></i><i></i></span><span>Strichstärke</span><i class="caret dim"></i></button>
        </div>
      </div>

      <div class="group colors">
        <div class="group-body">
          <button class="big selected color-slot"><span class="slot first"></span><span>1.<br>Farbe</span></button>
          <button class="big color-slot"><span class="slot second"></span><span>2.<br>Farbe</span></button>
          <div class="swatches" id="swatches"></div>
          <button class="big"><svg class="pal-icon"><use href="#rainbow"/></svg><span>Palette<br>bearbeiten</span></button>
        </div>
        <div class="group-name">Farben</div>
      </div>

      <div class="group paint3d">
        <div class="group-body">
          <button class="big"><svg class="pal-icon"><use href="#paint3d"/></svg><span>Mit Paint 3D<br>bearbeiten</span></button>
        </div>
      </div>
    </section>

    <main class="workarea">
      <div class="canvas">
        <span class="handle corner"></span><span class="handle top"></span><span class="handle left"></span>

        <div class="office">
          <div class="otitle">
            <svg class="icon"><use href="#xdoc"/></svg>
            <span>PDFV-Muster.odt - OpenOffice XML Form Document</span>
            <div class="winbuttons">
              <button title="Minimieren"><svg><use href="#winMin"/></svg></button>
              <button title="Verkleinern"><svg><use href="#winRestore"/></svg></button>
              <button title="Schließen"><svg><use href="#winClose"/></svg></button>
            </div>
          </div>

          <nav class="omenu">
            <a href="#"><u>D</u>atei</a>
            <a href="#"><u>B</u>earbeiten</a>
            <a href="#"><u>A</u>nsicht</a>
            <a href="#"><u>E</u>infügen</a>
            <a href="#"><u>F</u>ormat</a>
            <a href="#"><u>T</u>abelle</a>
            <a href="#">E<u>x</u>tras</a>
            <a href="#">Fen<u>s</u>ter</a>
            <a href="#"><u>H</u>ilfe</a>
          </nav>

          <div class="toolbar">
            <span class="grip"></span>
            <button title="Neu"><svg class="icon"><use href="#xdoc"/></svg></button><i class="drop"></i>
            <button title="Öffnen"><svg class="icon"><use href="#open"/></svg></button><i class="drop"></i>
            <button title="Speichern"><svg class="icon"><use href="#save"/></svg></button>
            <button title="E-Mail"><svg class="icon"><use href="#mail"/></svg></button>
            <span class="sep"></span>
            <button title="Bearbeiten" class="on"><svg class="icon"><use href="#edit"/></svg></button>
            <span class="sep"></span>
            <button title="PDF"><svg class="icon"><use href="#pdf"/></svg></button>
            <button title="Drucken"><svg class="icon"><use href="#print"/></svg></button>
            <button title="Seitenansicht"><svg class="icon"><use href="#preview"/></svg></button>
            <span class="sep"></span>
            <button title="Rechtschreibung" class="abc off"><span>ABC</span><svg class="tick"><use href="#spell"/></svg></button>
            <button title="Automatische Prüfung" class="abc on"><span>ABC</span><svg class="wave"><use href="#wave"/></svg></button>
            <span class="sep"></span>
            <button title="Ausschneiden"><svg class="icon"><use href="#cutGrey"/></svg></button>
            <button title="Kopieren"><svg class="icon"><use href="#copyGrey"/></svg></button>
            <button title="Einfügen"><svg class="icon"><use href="#clip"/></svg></button><i class="drop"></i>
            <button title="Format übertragen"><svg class="icon"><use href="#format"/></svg></button>
            <span class="sep"></span>
            <button title="Rückgängig"><svg class="icon"><use href="#undoO"/></svg></button><i class="drop"></i>
            <button title="Wiederherstellen"><svg class="icon"><use href="#redoO"/></svg></button><i class="drop dim"></i>
            <span class="sep"></span>
            <button title="Hyperlink"><svg class="icon"><use href="#globe"/></svg></button>
            <button title="Tabelle"><svg class="icon"><use href="#table"/></svg></button><i class="drop"></i>
            <button title="Zeichnen"><svg class="icon"><use href="#draw"/></svg></button>
            <span class="sep"></span>
            <button title="Suchen"><svg class="icon"><use href="#find"/></svg></button>
            <button title="Navigator"><svg class="icon"><use href="#compass"/></svg></button>
            <button title="Gallery"><svg class="icon"><use href="#gallery"/></svg></button>
            <button title="Datenquellen"><svg class="icon"><use href="#db"/></svg></button>
            <button title="Steuerzeichen"><svg class="icon"><use href="#pilcrow"/></svg></button>
            <button title="Maßstab"><svg class="icon"><use href="#zoomO"/></svg></button>
            <span class="sep"></span>
            <button title="Hilfe"><svg class="icon"><use href="#help"/></svg></button>
            <span class="overflow"></span>
            <span class="barend"></span>
            <span class="grip"></span>
            <span class="combo w-find"><select aria-label="Finden" class="hint"><option>Finden</option></select></span>
            <button title="Weitersuchen"><svg class="icon"><use href="#down"/></svg></button>
            <button title="Rückwärts suchen"><svg class="icon"><use href="#up"/></svg></button>
            <span class="overflow"></span>
            <span class="barend"></span>
          </div>

          <div class="toolbar">
            <span class="grip"></span>
            <button title="Formatvorlagen"><svg class="icon"><use href="#styles"/></svg></button>
            <span class="combo w-style"><select aria-label="Absatzvorlage"><option>Standard</option></select></span>
            <span class="combo w-font"><select aria-label="Schriftart"><option>Arial</option></select></span>
            <span class="combo w-size"><select aria-label="Schriftgröße"><option>14</option></select></span>
            <button title="Fett"><svg class="icon"><use href="#bold"/></svg></button>
            <button title="Kursiv"><svg class="icon"><use href="#italic"/></svg></button>
            <button title="Unterstrichen"><svg class="icon"><use href="#under"/></svg></button>
            <span class="sep"></span>
            <button title="Linksbündig" class="on"><svg class="icon"><use href="#alLeft"/></svg></button>
            <button title="Zentriert"><svg class="icon"><use href="#alCenter"/></svg></button>
            <button title="Rechtsbündig"><svg class="icon"><use href="#alRight"/></svg></button>
            <button title="Blocksatz"><svg class="icon"><use href="#alFull"/></svg></button>
            <span class="sep"></span>
            <button title="Nummerierung"><svg class="icon"><use href="#numList"/></svg></button>
            <button title="Aufzählung"><svg class="icon"><use href="#bulList"/></svg></button>
            <button title="Einzug vermindern"><svg class="icon"><use href="#outdent"/></svg></button>
            <button title="Einzug erhöhen"><svg class="icon"><use href="#indent"/></svg></button>
            <span class="sep"></span>
            <button title="Schriftfarbe"><svg class="icon"><use href="#fontColor"/></svg></button><i class="drop"></i>
            <button title="Hervorheben"><svg class="icon"><use href="#marker"/></svg></button><i class="drop"></i>
            <button title="Hintergrundfarbe"><svg class="icon"><use href="#bgColor"/></svg></button><i class="drop"></i>
            <span class="overflow"></span>
            <span class="barend"></span>
          </div>

          <div class="obody">
            <div class="docview">
              <div class="corner-cell"><span class="tabtype"></span></div>
              <div class="ruler-row">
                <div class="hruler">
                  <span class="neg"></span><span class="pos"></span><span class="neg"></span>
                  <div class="marks" id="hMarks"></div>
                  <div class="tabstops" id="tabStops"></div>
                  <span class="hourglass"></span><span class="hourglass end"></span>
                </div>
              </div>
              <div class="vruler-col">
                <div class="vruler">
                  <span class="neg"></span>
                  <div class="marks" id="vMarks"></div>
                </div>
              </div>
              <div class="desk">
                <article class="page">
                  <div class="textframe">
                    <div class="line l-title">
                      <h2>Abnahmeprotokoll</h2>
                      <input type="text" class="f-no" aria-label="Nummer">
                    </div>
                    <div class="line l-project">
                      <label for="projNr">zum Projekt:</label>
                      <input type="text" id="projNr" class="f-proj">
                      <input type="text" class="grow" aria-label="Projektname">
                    </div>
                    <div class="line l-ort">
                      <label for="plz">Bauort:</label>
                      <input type="text" id="plz" class="f-plz">
                      <input type="text" class="grow" aria-label="Ort">
                    </div>
                    <div class="line l-leiter">
                      <label for="leiter">Bauleiter:</label>
                      <input type="text" id="leiter" class="grow">
                    </div>
                    <div class="line l-aussen">
                      <h3>Außenbereich</h3>
                      <input type="checkbox" id="ok"><label for="ok">abgenommen</label>
                    </div>
                    <div class="line l-keller">
                      <label for="keller">Keller</label>
                      <input type="text" id="keller" class="f-keller">
                      <span class="doccombo"><select aria-label="Kellerraum"><option></option></select></span>
                    </div>
                  </div>
                </article>

                <aside class="palette">
                  <div class="palette-head"><span>F</span><i class="tri"></i><svg><use href="#winClose"/></svg></div>
                  <div class="palette-grid">
                    <button title="Auswahl"><svg class="icon"><use href="#cursor"/></svg></button>
                    <button title="Entwurfsmodus" class="on"><svg class="icon"><use href="#design"/></svg></button>
                    <button title="Kontrollfeld"><svg class="icon"><use href="#ctlGrey"/></svg></button>
                    <span></span>
                    <button title="Markierfeld"><svg class="icon"><use href="#check"/></svg></button>
                    <button title="Textfeld" class="on txt boxed"><span>ABC</span></button>
                    <button title="Formatiertes Feld"><svg class="icon"><use href="#numField"/></svg></button>
                    <button title="Schaltfläche"><svg class="icon"><use href="#btn"/></svg></button>
                    <button title="Optionsfeld"><svg class="icon"><use href="#radio"/></svg></button>
                    <button title="Listenfeld"><svg class="icon"><use href="#listBox"/></svg></button>
                    <button title="Kombinationsfeld"><svg class="icon"><use href="#comboBox"/></svg></button>
                    <button title="Beschriftung" class="txt"><span>ABC</span></button>
                    <button title="Weitere"><svg class="icon"><use href="#moreCtl"/></svg></button>
                    <button title="Formular-Entwurf" class="on"><svg class="icon"><use href="#formDesign"/></svg></button>
                  </div>
                </aside>
              </div>
            </div>

            <div class="docscroll"><span class="chev up"></span><span class="thumb"></span></div>
            <div class="splitter"></div>

            <section class="datanav">
              <div class="model-row">
                <span class="combo dark"><select aria-label="Modell"><option>Model 1</option></select></span>
                <button class="models"><u>M</u>odels</button>
              </div>
              <div class="navtabs">
                <button class="active">Instance 1</button><button>Submissionen</button><button>Bindungen</button>
              </div>
              <div class="navpage">
                <div class="navtools">
                  <button title="Element hinzufügen"><svg class="icon"><use href="#addElem"/></svg></button>
                  <button title="Attribut hinzufügen"><svg class="icon"><use href="#addAttr"/></svg></button>
                  <button title="Bearbeiten"><svg class="icon"><use href="#editGrey"/></svg></button>
                  <span class="sep"></span>
                  <button title="Löschen"><svg class="icon"><use href="#delGrey"/></svg></button>
                </div>
                <div class="tree"><svg class="tag"><use href="#xmlTag"/></svg>instanceData</div>
              </div>
            </section>

            <section class="sidebar">
              <div class="side-title">Eigenschaften <svg><use href="#closeBold"/></svg></div>
              <div class="side-head"><i class="fold"></i>Text<svg><use href="#dialog"/></svg></div>
              <div class="side-row">
                <span class="combo s-font"><select aria-label="Schriftart"><option>Arial</option></select></span>
                <span class="combo s-size"><select aria-label="Größe"><option>14</option></select></span>
              </div>
              <div class="side-row font-row">
                <div class="box">
                  <button title="Fett"><svg class="icon"><use href="#bold"/></svg></button>
                  <button title="Kursiv"><svg class="icon"><use href="#italic"/></svg></button>
                  <button title="Unterstrichen"><svg class="icon"><use href="#under"/></svg></button><i class="drop"></i>
                  <button title="Durchgestrichen"><svg class="icon"><use href="#strike"/></svg></button>
                  <button title="Schatten"><svg class="icon"><use href="#shadow"/></svg></button>
                </div>
                <div class="box">
                  <button title="Größer"><svg class="icon"><use href="#grow"/></svg></button>
                  <button title="Kleiner"><svg class="icon"><use href="#shrink"/></svg></button>
                </div>
              </div>
              <div class="side-row style-row">
                <div class="box">
                  <button title="Hochgestellt"><svg class="icon"><use href="#super"/></svg></button>
                  <button title="Tiefgestellt"><svg class="icon"><use href="#sub"/></svg></button>
                </div>
                <div class="box"><button title="Laufweite"><svg class="icon"><use href="#spacing"/></svg></button><i class="drop"></i></div>
                <div class="box push"><button title="Schriftfarbe"><svg class="icon"><use href="#fontColor"/></svg></button><i class="drop"></i></div>
                <div class="box"><button title="Hervorheben"><svg class="icon"><use href="#marker"/></svg></button><i class="drop"></i></div>
              </div>

              <div class="side-head"><i class="fold"></i>Absatz<svg><use href="#dialog"/></svg></div>
              <div class="side-row align-row">
                <div class="box">
                  <button title="Linksbündig" class="on"><svg class="icon"><use href="#alLeft"/></svg></button>
                  <button title="Zentriert"><svg class="icon"><use href="#alCenter"/></svg></button>
                  <button title="Rechtsbündig"><svg class="icon"><use href="#alRight"/></svg></button>
                  <button title="Blocksatz"><svg class="icon"><use href="#alFull"/></svg></button>
                </div>
              </div>
              <div class="side-row list-row">
                <div class="box">
                  <button title="Aufzählung"><svg class="icon"><use href="#bulList"/></svg></button><i class="drop"></i>
                  <button title="Nummerierung"><svg class="icon"><use href="#numList"/></svg></button><i class="drop"></i>
                </div>
                <div class="box fillbox"><svg class="icon"><use href="#bucketO"/></svg><span class="nofill"></span><i class="drop"></i></div>
              </div>
              <div class="side-cols">
                <div>
                  <p>A<u>b</u>stand</p>
                  <div class="box">
                    <button title="Abstand erhöhen"><svg class="icon"><use href="#spaceUp"/></svg></button>
                    <button title="Abstand verringern"><svg class="icon"><use href="#spaceDown"/></svg></button>
                  </div>
                  <div class="spins">
                    <label class="spinrow"><svg class="icon"><use href="#above"/></svg><span class="spin"><input type="text" value="0,00 cm"><i></i></span></label>
                    <label class="spinrow"><svg class="icon"><use href="#below"/></svg><span class="spin"><input type="text" value="0,00 cm"><i></i></span></label>
                    <div class="box"><button title="Zeilenabstand"><svg class="icon"><use href="#lineSp"/></svg></button><i class="drop"></i></div>
                  </div>
                </div>
                <div>
                  <p>Einzug</p>
                  <div class="box">
                    <button title="Einzug erhöhen"><svg class="icon"><use href="#indent"/></svg></button>
                    <button title="Einzug vermindern"><svg class="icon"><use href="#outdent"/></svg></button>
                    <button title="Hängend" class="wide"><svg><use href="#hanging"/></svg></button>
                  </div>
                  <div class="spins">
                    <label class="spinrow"><svg class="icon"><use href="#before"/></svg><span class="spin"><input type="text" value="0,00 cm"><i></i></span></label>
                    <label class="spinrow"><svg class="icon"><use href="#after"/></svg><span class="spin"><input type="text" value="0,00 cm"><i></i></span></label>
                    <label class="spinrow"><svg class="icon"><use href="#first"/></svg><span class="spin"><input type="text" value="0,00 cm"><i></i></span></label>
                  </div>
                </div>
              </div>
            </section>

            <nav class="decks">
              <span class="burger"></span>
              <button title="Eigenschaften" class="active"><svg><use href="#cube"/></svg></button>
              <button title="Vorlagen"><svg><use href="#person"/></svg></button>
              <button title="Gallery"><svg><use href="#photos"/></svg></button>
              <button title="Navigator"><svg><use href="#navi"/></svg></button>
            </nav>
          </div>
        </div>
      </div>

      <div class="vscroll"><span class="chev up"></span><span class="thumb"></span><span class="chev down"></span></div>
      <div class="hscroll"><span class="chev back"></span><span class="thumb"></span><span class="chev fwd"></span></div>
    </main>

    <footer class="statusbar">
      <div class="cell"><svg><use href="#move"/></svg></div>
      <div class="cell"><svg><use href="#selSize"/></svg></div>
      <div class="cell"><svg><use href="#imgSize"/></svg>1920 × 1040px</div>
      <div class="cell"></div>
      <div class="zoom">
        <label for="zoom">100 %</label>
        <button title="Verkleinern" class="minus">−</button>
        <input type="range" id="zoom" min="0" max="100" value="50">
        <button title="Vergrößern">+</button>
      </div>
    </footer>
  </div>

  <script>
    // Colour palette, empty entries are free slots
    const colors = [
      "#000000", "#7f7f7f", "#880015", "#ed1c24", "#ff7f27", "#fff200", "#22b14c", "#00a2e8", "#3f48cc", "#a349a4",
      "#ffffff", "#c3c3c3", "#b97a57", "#ffaec9", "#ffc90e", "#efe4b0", "#b5e61d", "#99d9ea", "#7092be", "#c8bfe7",
      "", "", "", "", "", "", "", "", "", ""
    ];
    document.getElementById("swatches").innerHTML = colors.map(c =>
      c ? `<button title="${c}"><i style="background:${c}"></i></button>` : `<button title="frei"></button>`
    ).join("");

    // Shape gallery, 16x16 paths
    const shapes = [
      "M1 2l14 12", "M1 13c3-14 5-10 7-4s4-1 7-7", "M8 2.500c9 0 9 11 0 11s-9-11 0-11z", "M1 2.500h14v11H1z",
      "M4 2.500h8q3 0 3 3v5q0 3-3 3H4q-3 0-3-3v-5q0-3 3-3z", "M1 13.500L6 2.500h6l-3 5h6v6z", "M8 2l7 12H1z",
      "M1 1v13h14z", "M8 1l7 7-7 7-7-7z", "M8 1l7 6-3 8H4L1 7z", "M8 .500l7 3.500v8l-7 3.500L1 12V4z",
      "M1 4.500h7v-3l7 6-7 6v-3H1z", "M15 4.500H8v-3l-7 6 7 6v-3h7z", "M8 1l7 7h-4v6.500H5V8H1z",
      "M8 15l7-7h-4V1H5v7H1z", "M8 1l2 5 5 2-5 2-2 5-2-5-5-2 5-2z", "M8 1l2 5h5l-4 3.500 2 5.500-5-3.500L3 15l2-5.500L1 6h5z",
      "M8 .500l2.500 4H15L13 8l2 3.500h-4.500l-2.500 4-2.500-4H1L3 8 1 4.500h4.500z",
      "M3 2h10q2 0 2 2v5q0 2-2 2H8l-3 4v-4H3q-2 0-2-2V4q0-2 2-2z", "M8 2c9 0 9 9 1 9l-4 4v-4.500C-1 9 0 2 8 2z",
      "M4 3q2-2 4-1 3-2 5 1 3 2 1 5 0 3-3 3-2 2-4 1l-3 2v-2q-3-1-2-4-2-3 2-5z"
    ];
    document.getElementById("shapeGrid").innerHTML = shapes.map((d, i) =>
      `<button title="Form ${i + 1}"><svg viewBox="0 0 16 16"><path d="${d}" fill="${i < 2 ? "none" : "url(#gShape)"}" stroke="#1b6aa5" stroke-width="1.100"/></svg></button>`
    ).join("");

    // Rulers: every centimetre gets dot, tick, dot and its number
    function marks(cm, zero, last) {
      let out = "";
      for (let i = 1; i <= cm; i++) {
        const n = Math.abs(i - zero);
        out += `<i class="dot"></i><i class="tick"></i><i class="dot"></i><b>${n === 0 || n > last ? "" : n}</b>`;
      }
      return out;
    }
    document.getElementById("hMarks").innerHTML = marks(21, 2, 18);
    document.getElementById("vMarks").innerHTML = marks(30, 2, 16);
    document.getElementById("tabStops").innerHTML = "<i></i>".repeat(13);
  </script>
</body>
</html>
```

FILE: styles.css
```css
* {
  box-sizing: border-box;
}
body {
  margin: 0;
  font-family: "Open Sans", "Noto Sans", sans-serif;
  font-size: 12px;
  line-height: 16px;
  color: #000;
  overflow: hidden;
}
button {
  font: inherit;
  color: inherit;
  background: none;
  border: none;
  padding: 0;
  margin: 0;
}
input, select {
  font: inherit;
  color: inherit;
  margin: 0;
}
svg {
  display: block;
  flex: none;
}
h1, h2, h3, p {
  margin: 0;
}
.sprite {
  position: absolute;
  width: 0;
  height: 0;
}
.icon {
  width: 16px;
  height: 16px;
}
.paint {
  height: 100vh;
  display: flex;
  flex-direction: column;
  background: #fff;
}

/* small arrows */
.caret {
  display: block;
  width: 0;
  height: 0;
  border: 3px solid transparent;
  border-top-color: #222;
  border-bottom: none;
}
.caret.dim {
  border-top-color: #b0b0b0;
}
.caret.flip {
  transform: rotate(180deg);
}
.caret.bar, .customize .caret {
  box-shadow: 0 -3px 0 0 #fff, 0 -4px 0 0 #222;
}
.chev {
  width: 6px;
  height: 6px;
  border: solid #555;
  border-width: 2px 0 0 2px;
  flex: none;
}
.chev.up { transform: rotate(45deg); }
.chev.down { transform: rotate(225deg); }
.chev.back { transform: rotate(-45deg); }
.chev.fwd { transform: rotate(135deg); }

/* title bar */
.titlebar {
  height: 23px;
  flex: none;
  display: flex;
  align-items: center;
}
.titlebar h1 {
  font-size: 12px;
  font-weight: normal;
}
.tsep {
  width: 1px;
  height: 12px;
  background: #999;
  margin: 0 7px;
}
.titlebar > button {
  width: 22px;
  display: flex;
  justify-content: center;
}
.titlebar > .customize {
  width: 12px;
}
.winbuttons {
  margin-left: auto;
  display: flex;
}
.winbuttons button {
  width: 45px;
  height: 20px;
  display: flex;
  align-items: center;
  justify-content: center;
}
.winbuttons svg {
  width: 10px;
  height: 10px;
}
.titlebar .winbuttons {
  margin-right: 3px;
  margin-bottom: 3px;
}

/* ribbon tabs */
.tabs {
  height: 24px;
  flex: none;
  display: flex;
  border-bottom: 1px solid #dadbdc;
}
.tab {
  height: 23px;
  color: #444;
  padding: 0 14px;
}
.tab.file {
  width: 56px;
  background: #1979ca;
  color: #fff;
}
.tab.current {
  width: 52px;
  height: 24px;
  background: #f5f6f7;
  border: 1px solid #dadbdc;
  border-bottom: none;
  padding: 0;
}
.tabs-right {
  margin-left: auto;
  display: flex;
  align-items: center;
  gap: 12px;
  padding-right: 4px;
}
.tabs-right .chev {
  border-color: #9ab;
  border-width: 1px 0 0 1px;
}
.helpbtn {
  width: 14px;
  height: 14px;
  line-height: 14px;
  border-radius: 7px;
  background: #0c72c7;
  color: #fff;
  font-size: 11px;
  font-weight: bold;
}

/* ribbon */
.ribbon {
  height: 92px;
  flex: none;
  display: flex;
  background: #f5f6f7;
  border-bottom: 1px solid #cfd3de;
  color: #444;
}
.group {
  position: relative;
  display: flex;
  flex-direction: column;
  padding-top: 4px;
  flex: none;
}
.group::after {
  content: "";
  position: absolute;
  right: 0;
  top: 2px;
  height: 86px;
  width: 1px;
  background: #e2e3e4;
}
.group-body {
  display: flex;
  height: 66px;
}
.group-name {
  text-align: center;
  color: #5a5a5a;
  margin-top: 4px;
}
.clipboard { width: 163px; padding-left: 3px; }
.image { width: 170px; padding-left: 4px; }
.tools { width: 80px; }
.brushes { width: 53px; align-items: center; }
.shapes { width: 241px; padding-left: 5px; }
.stroke { width: 76px; align-items: center; }
.colors { width: 376px; padding-left: 4px; }
.paint3d { width: 79px; align-items: center; }
.image .group-name, .shapes .group-name, .colors .group-name {
  padding-right: 8px;
}
.big {
  display: flex;
  flex-direction: column;
  align-items: center;
  padding-top: 3px;
  line-height: 13px;
  white-space: nowrap;
}
.big > span:not([class]) {
  margin-top: 3px;
}
.big .caret {
  margin-top: 5px;
}
.clipboard .big {
  width: 57px;
  padding-right: 1px;
}
.paste-icon { width: 26px; height: 32px; }
.big-icon { width: 32px; height: 32px; }
.pal-icon { width: 30px; height: 30px; margin: 1px 0; }
.selected {
  background: #c9e0f7;
  border: 1px solid #62a2e4;
  padding-top: 2px;
}
.split {
  width: 62px;
  background: linear-gradient(#c9e0f7 36px, #62a2e4 36px, #62a2e4 37px, #c9e0f7 37px);
}
.marquee {
  width: 30px;
  height: 24px;
  margin: 4px 0;
  border: 1px dashed #1a5fa0;
}
.stack {
  display: flex;
  flex-direction: column;
}
.small {
  height: 22px;
  display: flex;
  align-items: center;
  gap: 2px;
  padding-left: 2px;
  white-space: nowrap;
}
.small .caret {
  margin-left: 3px;
}
.image .stack { padding-left: 3px; }
.disabled {
  color: #999;
}
.tool-grid {
  display: grid;
  grid-template-columns: repeat(3, 24px);
  grid-auto-rows: 28px;
  justify-content: center;
  height: 66px;
  padding-top: 5px;
}
.tool-grid button {
  display: flex;
  align-items: center;
  justify-content: center;
}
.letter {
  font-family: "Liberation Serif", serif;
  font-weight: bold;
  font-size: 20px;
  color: #1f3b5c;
}
.gallery {
  width: 158px;
  height: 60px;
  margin-top: 3px;
  display: flex;
  border: 1px solid #d4d8dc;
  background: #fcfdfe;
}
.shape-grid {
  flex: 1;
  display: grid;
  grid-template-columns: repeat(7, 20px);
  grid-auto-rows: 20px;
}
.shape-grid button {
  padding: 1px 2px;
}
.shape-grid svg {
  width: 16px;
  height: 16px;
}
.gallery-scroll {
  width: 15px;
  display: grid;
  border-left: 1px solid #d4d8dc;
  background: #f5f6f7;
}
.gallery-scroll button {
  display: grid;
  place-items: center;
}
.shapes .stack { padding-left: 3px; }
.lines {
  width: 32px;
  height: 32px;
  display: flex;
  flex-direction: column;
  gap: 4px;
  padding-top: 1px;
}
.lines i {
  background: #7b8fb2;
  height: 1px;
}
.lines i:nth-child(2) { height: 2px; }
.lines i:nth-child(3) { height: 4px; }
.lines i:nth-child(4) { height: 7px; }
.color-slot {
  width: 42px;
}
.slot {
  width: 32px;
  height: 32px;
  border: 1px solid #7f7f7f;
  padding: 2px;
  background: #000;
  box-shadow: inset 0 0 0 2px #fff;
}
.slot.second {
  width: 24px;
  height: 24px;
  margin: 4px;
  background: #fff;
}
.color-slot + .color-slot { margin-right: 1px; }
.swatches {
  display: grid;
  grid-template-columns: repeat(10, 20px);
  grid-auto-rows: 20px;
  gap: 2px;
  padding-top: 1px;
}
.swatches button {
  border: 1px solid #a0a0a0;
}
.swatches i {
  display: block;
  height: 18px;
  border: 1px solid #fff;
}
.colors .big:last-child {
  margin-left: 1px;
}

/* work area */
.workarea {
  flex: 1;
  min-height: 0;
  display: grid;
  grid-template-columns: minmax(0, 1fr) 17px;
  grid-template-rows: minmax(0, 1fr) 19px;
  background: #efefef;
}
.canvas {
  position: relative;
  padding: 5px 0 0 5px;
  background: linear-gradient(#c6cddf, #dce6f4);
  min-width: 0;
  min-height: 0;
  border-right: 1px solid #fff;
  border-bottom: 1px solid #fff;
}
.handle {
  position: absolute;
  width: 5px;
  height: 5px;
  border: 1px solid #555;
  background: #fff;
  z-index: 2;
}
.handle.corner { left: 3px; top: 3px; }
.handle.top { left: 964px; top: 3px; }
.handle.left { left: 3px; top: 524px; }
.office {
  height: 100%;
  display: flex;
  flex-direction: column;
  background: #fff;
  border: 1px dashed #1a80d0;
  border-width: 1px 0 0 1px;
  overflow: hidden;
}
.vscroll {
  display: flex;
  flex-direction: column;
  align-items: center;
}
.vscroll .chev.up { margin: 7px 0 3px; }
.vscroll .thumb {
  flex: none;
  width: 15px;
  height: calc(100% - 184px);
  background: #cdcdcd;
}
.vscroll .chev.down { margin: auto 0 6px; }
.hscroll {
  grid-column: 1 / -1;
  display: flex;
  align-items: center;
  padding: 0 24px 2px 6px;
  border-bottom: 1px solid #d7d7d7;
}
.hscroll .thumb {
  width: calc(100% - 48px);
  height: 15px;
  margin-left: 5px;
  background: #cdcdcd;
}
.hscroll .chev.fwd { margin-left: auto; }

/* office window */
.otitle {
  height: 23px;
  flex: none;
  display: flex;
  align-items: center;
  gap: 3px;
  padding: 0 0 2px 3px;
}
.otitle .winbuttons {
  margin-right: -20px;
}
.omenu {
  height: 22px;
  flex: none;
  display: flex;
  align-items: center;
  gap: 9px;
  padding-left: 5px;
  border-bottom: 1px solid #d8d8d8;
}
.omenu a {
  color: #000;
  text-decoration: none;
}
.toolbar {
  height: 31px;
  flex: none;
  display: flex;
  align-items: center;
  padding-left: 2px;
  border-bottom: 1px solid #b9b9b9;
}
.toolbar button, .box button, .navtools button, .palette-grid button {
  width: 25px;
  height: 26px;
  display: flex;
  align-items: center;
  justify-content: center;
  flex: none;
}
.toolbar .on, .box .on, .palette .on {
  background: #cce8ff;
  border: 1px solid #99d1ff;
}
.grip {
  width: 2px;
  height: 18px;
  margin: 0 4px 0 2px;
  border-left: 2px dotted #8a8a8a;
}
.sep {
  width: 1px;
  height: 14px;
  margin: 0 4px 0 3px;
  background: #c6c6c6;
}
.drop {
  width: 11px;
  flex: none;
}
.drop::after {
  content: "";
  display: block;
  width: 0;
  margin-left: 3px;
  border: 3px solid transparent;
  border-top-color: #000;
  border-bottom: none;
}
.drop.dim::after {
  border-top-color: #b0b0b0;
}
.toolbar .abc {
  flex-direction: column;
  font-size: 8px;
  line-height: 8px;
  font-weight: bold;
  color: #2d4454;
}
.toolbar .abc.off { color: #bbb; }
.wave { width: 16px; height: 5px; margin-top: 1px; }
.tick { width: 12px; height: 10px; margin-top: -2px; }
.overflow {
  width: 10px;
  height: 25px;
  margin-left: 6px;
  background: linear-gradient(#e8e8e8, #a9a9a9);
  flex: none;
  display: flex;
  align-items: flex-end;
  justify-content: center;
}
.overflow::after {
  content: "";
  margin-bottom: 4px;
  border: 3px solid transparent;
  border-top-color: #000;
  border-bottom: none;
}
.barend {
  width: 1px;
  height: 30px;
  margin: 0 3px 0 2px;
  background: #c6c6c6;
}
.combo {
  position: relative;
  display: block;
  height: 23px;
  flex: none;
}
.combo select {
  width: 100%;
  height: 23px;
  padding: 0 20px 0 3px;
  border: 1px solid #ababab;
  border-radius: 0;
  background: #fff;
  appearance: none;
}
.combo::before {
  content: "";
  position: absolute;
  right: 2px;
  top: 2px;
  width: 17px;
  height: 19px;
  background: #e1e1e1;
  border: 1px solid #b0b0b0;
  pointer-events: none;
}
.combo::after {
  content: "";
  position: absolute;
  right: 8px;
  top: 7px;
  width: 6px;
  height: 6px;
  border: solid #555;
  border-width: 0 1px 1px 0;
  transform: rotate(45deg);
  pointer-events: none;
}
.combo .hint { color: #777; }
.w-find { width: 100px; }
.w-style { width: 136px; margin: 0 8px; }
.w-font { width: 152px; margin-right: 8px; }
.w-size { width: 61px; margin-right: 7px; }
.dark select { border-color: #7a7f85; }

/* document view */
.obody {
  flex: 1;
  min-height: 0;
  display: flex;
  background: #f0f0f0;
  border-top: 2px solid #7e7e7e;
  border-left: 1px solid #7e7e7e;
}
.docview {
  flex: 1;
  min-width: 0;
  display: grid;
  grid-template-columns: 26px minmax(0, 1fr);
  grid-template-rows: 26px minmax(0, 1fr);
}
.corner-cell {
  padding: 3px 0 0 3px;
}
.tabtype {
  display: flex;
  width: 18px;
  height: 18px;
  border: 1px solid #a0a0a0;
  align-items: center;
  justify-content: center;
}
.tabtype::after {
  content: "";
  width: 6px;
  height: 6px;
  border: solid #000;
  border-width: 0 0 2px 2px;
}
.ruler-row {
  display: flex;
  justify-content: center;
  padding-top: 3px;
}
.hruler {
  position: relative;
  width: 794px;
  height: 18px;
  display: flex;
}
.hruler .neg, .vruler .neg {
  width: 76px;
  border: 1px solid #a0a0a0;
}
.hruler .pos {
  flex: 1;
  background: #fff;
}
.marks {
  position: absolute;
  display: flex;
}
.hruler .marks {
  left: 5px;
  top: 0;
  width: 794px;
  height: 18px;
  align-items: center;
}
.marks > * {
  flex: 1 1 0;
  width: 0;
  display: flex;
  align-items: center;
  justify-content: center;
  font-weight: normal;
}
.marks .dot::after {
  content: "";
  width: 1px;
  height: 1px;
  background: #000;
}
.marks .tick::after {
  content: "";
  width: 1px;
  height: 3px;
  background: #000;
}
.tabstops {
  position: absolute;
  left: 78px;
  bottom: -1px;
  width: 614px;
  display: flex;
}
.tabstops i {
  flex: 1;
  height: 4px;
  display: flex;
  justify-content: flex-end;
}
.tabstops i::after {
  content: "";
  width: 5px;
  height: 4px;
  border-bottom: 1px solid #000;
  background: linear-gradient(#000, #000) center / 1px 4px no-repeat;
}
.hourglass {
  position: absolute;
  left: 70px;
  top: 0;
  width: 12px;
  height: 18px;
  background: #555;
  clip-path: polygon(0 0, 100% 0, 100% 15%, 60% 50%, 100% 85%, 100% 100%, 0 100%, 0 85%, 40% 50%, 0 15%);
}
.hourglass::after {
  content: "";
  position: absolute;
  inset: 1px;
  background: #f4f4f4;
  clip-path: polygon(0 0, 100% 0, 100% 12%, 50% 48%, 50% 52%, 100% 88%, 100% 100%, 0 100%, 0 88%, 50% 52%, 50% 48%, 0 12%);
}
.hourglass.end {
  left: 713px;
}
.vruler-col {
  padding: 39px 0 0 3px;
  overflow: hidden;
}
.vruler {
  position: relative;
  width: 18px;
  height: 1134px;
  background: linear-gradient(#f0f0f0 76px, #fff 76px);
}
.vruler .neg {
  display: block;
  width: 18px;
  height: 76px;
}
.vruler .marks {
  left: 0;
  top: 5px;
  width: 18px;
  height: 1134px;
  flex-direction: column;
}
.vruler .marks > * {
  width: 18px;
  height: 0;
}
.vruler .marks b {
  writing-mode: vertical-rl;
  transform: rotate(180deg);
}
.vruler .tick::after {
  width: 3px;
  height: 1px;
}
.desk {
  position: relative;
  display: flex;
  justify-content: center;
  align-items: flex-start;
  padding: 37px 0 0 1px;
  background: #ababab;
  border-left: 1px solid #000;
  border-top: 1px solid #000;
  overflow: hidden;
}
.page {
  width: 796px;
  height: 1123px;
  flex: none;
  background: #fff;
  border: 1px solid #000;
  border-right-width: 2px;
  padding: 76px 75px 76px 75px;
  font-family: "Liberation Sans", Arial, sans-serif;
}
.textframe {
  width: 643px;
  height: 100%;
  border: 1px solid #c0c0c0;
}
.line {
  display: flex;
  align-items: center;
  font-size: 24px;
  line-height: 28px;
}
.line label {
  width: 141px;
}
.line input[type="text"], .doccombo select {
  height: 100%;
  min-width: 0;
  border: 1px solid #c0c0c0;
  background: #fff;
}
.grow {
  flex: 1;
}
.l-title {
  height: 34px;
  margin-top: 37px;
  padding-right: 11px;
  justify-content: space-between;
}
.line h2 {
  font-size: 32px;
}
.f-no { width: 160px; }
.l-project {
  height: 36px;
  margin-top: 29px;
  gap: 5px;
  padding-right: 11px;
}
.f-proj { width: 142px; }
.l-project label, .l-ort label { margin-right: -5px; }
.l-ort {
  height: 36px;
  margin-top: 26px;
  gap: 5px;
  padding-right: 13px;
}
.f-plz { width: 96px; }
.l-leiter {
  height: 34px;
  margin-top: 44px;
  padding-right: 9px;
}
.l-aussen {
  height: 28px;
  margin-top: 79px;
}
.line h3 {
  font-size: 24px;
  width: 188px;
}
.l-aussen input {
  appearance: none;
  width: 11px;
  height: 11px;
  border: solid #777;
  border-width: 1px 0 0 1px;
}
.l-aussen label {
  font-size: 16px;
  padding-left: 6px;
  color: #333;
}
.l-keller {
  height: 30px;
  margin-top: 23px;
  font-size: 19px;
}
.l-keller label {
  width: 52px;
}
.f-keller { width: 63px; margin-right: 2px; }
.doccombo {
  position: relative;
  width: 495px;
  height: 30px;
}
.doccombo select {
  width: 100%;
  appearance: none;
  border-radius: 0;
}
.doccombo::after {
  content: "";
  position: absolute;
  right: 1px;
  top: 1px;
  width: 17px;
  height: 28px;
  background: conic-gradient(from -45deg at 50% 100%, #000 90deg, transparent 0) center / 10px 5px no-repeat, #f0f0f0;
  background: conic-gradient(from -45deg at 50% 100%, #000 90deg, #f0f0f0 0) center / 10px 5px no-repeat, #f0f0f0;
  border: 1px solid #555;
  border-width: 0 1px 1px 0;
  transform: none;
  pointer-events: none;
}

/* floating palette */
.palette {
  position: absolute;
  left: 217px;
  top: 216px;
  width: 62px;
  height: 239px;
  background: #fff;
  border: 1px solid #d0d0d0;
  box-shadow: inset 0 0 0 1px #f0f0f0;
}
.palette-head {
  height: 25px;
  display: flex;
  align-items: center;
  gap: 9px;
  padding-left: 3px;
  background: #b4b4b4;
}
.palette-head svg {
  width: 11px;
  height: 11px;
  margin-left: 2px;
}
.tri {
  border: 6px solid transparent;
  border-top-color: #000;
  border-bottom: none;
}
.palette-grid {
  display: grid;
  grid-template-columns: 25px 25px;
  grid-auto-rows: 26px;
  row-gap: 4px;
  padding: 1px 0 0 4px;
}
.txt {
  font-size: 8px;
  font-weight: bold;
  color: #2d4454;
}
.boxed span {
  border: 1px solid #6c7a88;
  background: #fff;
  line-height: 9px;
}

/* document scrollbar and splitter */
.docscroll {
  width: 16px;
  flex: none;
  display: flex;
  flex-direction: column;
  align-items: center;
}
.docscroll .chev { margin: 8px 0 3px; }
.docscroll .thumb {
  width: 14px;
  height: 535px;
  background: #cdcdcd;
}
.splitter {
  width: 9px;
  flex: none;
  display: flex;
  align-items: center;
  justify-content: center;
  border-right: 1px solid #909090;
  border-left: 1px solid #dcdcdc;
}
.splitter::after {
  content: "";
  height: 34px;
  margin-bottom: -134px;
  border-left: 2px dotted #777;
}

/* data navigator */
.datanav {
  width: 254px;
  flex: none;
  display: flex;
  flex-direction: column;
  padding: 10px 5px 0 9px;
  border-right: 2px solid #7e7e7e;
}
.model-row {
  display: flex;
  gap: 7px;
  overflow: hidden;
}
.model-row .combo {
  width: 182px;
}
.models {
  width: 90px;
  height: 24px;
  flex: none;
  padding-left: 20px;
  text-align: left;
  background: #e1e1e1;
  border: 1px solid #adadad;
}
.navtabs {
  display: flex;
  align-items: flex-end;
  margin-top: 6px;
}
.navtabs button {
  height: 21px;
  border: 1px solid #d9d9d9;
  border-bottom: none;
  border-left: none;
  padding: 0 2px;
  white-space: nowrap;
}
.navtabs .active {
  height: 23px;
  background: #fff;
  font-weight: 600;
  border-left: 1px solid #d9d9d9;
}
.navpage {
  flex: 1;
  display: flex;
  flex-direction: column;
  background: #fff;
  border-left: 1px solid #d9d9d9;
}
.navtools {
  display: flex;
  align-items: center;
  height: 31px;
  padding-left: 1px;
}
.tree {
  flex: 1;
  display: flex;
  align-items: flex-start;
  gap: 6px;
  margin-left: 5px;
  padding: 1px 0 0 18px;
  border: solid #828790;
  border-width: 1px 0 0 1px;
}
.tag {
  width: 16px;
  height: 12px;
  margin-top: 2px;
}

/* properties sidebar */
.sidebar {
  width: 229px;
  flex: none;
  margin-left: 2px;
  border: 1px solid #e0e0e0;
}
.side-title {
  height: 31px;
  display: flex;
  align-items: center;
  justify-content: space-between;
  padding: 0 6px 0 10px;
  font-weight: 600;
}
.side-title svg {
  width: 8px;
  height: 8px;
  margin-bottom: 6px;
}
.side-head {
  height: 26px;
  display: flex;
  align-items: center;
  padding: 0 5px;
  font-weight: 600;
  background: linear-gradient(#dedede, #f0f0f0);
}
.side-head svg {
  width: 11px;
  height: 10px;
  margin: 0 0 6px auto;
}
.fold {
  width: 9px;
  height: 9px;
  margin-right: 5px;
  border: 1px solid #4a5f78;
  background: linear-gradient(#4a5f78, #4a5f78) center / 5px 1px no-repeat;
}
.side-row {
  display: flex;
  gap: 6px;
  padding: 0 6px;
  margin-bottom: 8px;
}
.font-row {
  gap: 20px;
  margin-bottom: 10px;
}
.style-row {
  margin-bottom: 4px;
}
.align-row {
  margin-bottom: 5px;
}
.list-row {
  gap: 15px;
  margin-bottom: 2px;
}
.s-font { width: 155px; }
.s-size { width: 51px; }
.box {
  display: flex;
  align-items: center;
  width: max-content;
  height: 31px;
  padding: 0 1px;
  background: #fafafa;
  border: 1px solid #e3e3e3;
}
.push {
  margin-left: 11px;
}
.box .drop {
  width: 12px;
}
.box .wide {
  width: 30px;
}
.wide svg {
  width: 20px;
  height: 16px;
}
.fillbox {
  padding-left: 3px;
}
.nofill {
  width: 13px;
  height: 13px;
  margin: 0 6px 0 1px;
  outline: 1px solid #2d4f80;
  border: 1px solid #fff;
  box-shadow: inset 0 0 0 1px #000;
  background: #fff;
}
.side-cols {
  display: flex;
  justify-content: space-between;
  padding: 0 5px 0 6px;
}
.side-cols p {
  margin-bottom: 1px;
}
.spins {
  display: flex;
  flex-direction: column;
  gap: 8px;
  margin-top: 10px;
}
.spinrow {
  display: flex;
  align-items: center;
  gap: 4px;
  height: 24px;
}
.spin {
  display: flex;
  align-items: center;
  width: 88px;
  height: 24px;
  background: #fff;
  border: 1px solid #ababab;
  padding-right: 1px;
}
.side-cols > div:last-child .spin {
  width: 82px;
}
.spin input {
  flex: 1;
  min-width: 0;
  border: none;
  padding: 0 2px;
  background: none;
}
.spin i {
  width: 15px;
  height: 20px;
  border: 1px solid #b0b0b0;
  background:
    conic-gradient(from -45deg at 50% 100%, #000 90deg, transparent 0) center 12px / 5px 3px no-repeat,
    conic-gradient(from 135deg at 50% 0, #000 90deg, transparent 0) center 3px / 5px 3px no-repeat,
    linear-gradient(#b0b0b0, #b0b0b0) center / 100% 1px no-repeat,
    #e9e9e9;
}

/* deck buttons, partly hidden behind the window edge */
.decks {
  width: 17px;
  flex: none;
  overflow: hidden;
  padding: 12px 0 0 4px;
}
.burger {
  display: block;
  width: 10px;
  height: 5px;
  margin: 0 0 20px 7px;
  background: repeating-linear-gradient(#1c2f3d 0 1px, transparent 1px 2px);
}
.decks button {
  display: block;
  width: 36px;
  height: 32px;
  padding: 3px 4px;
  margin-bottom: 4px;
  border: 1px solid transparent;
  border-radius: 4px;
}
.decks .active {
  border-color: #aaa;
}
.decks svg {
  width: 20px;
  height: 24px;
}

/* status bar */
.statusbar {
  height: 25px;
  flex: none;
  display: flex;
  background: #f0f0f0;
}
.cell {
  width: 156px;
  display: flex;
  align-items: center;
  gap: 5px;
  padding-left: 4px;
  border-right: 1px solid #d7d7d7;
}
.cell svg {
  width: 13px;
  height: 13px;
}
.zoom {
  margin-left: auto;
  display: flex;
  align-items: center;
  gap: 10px;
  padding: 0 24px 0 18px;
  border-left: 1px solid #d7d7d7;
}
.zoom label {
  margin-right: -3px;
}
.zoom button {
  width: 15px;
  height: 15px;
  line-height: 12px;
  border: 1px solid #777;
  border-radius: 8px;
  font-weight: bold;
}
.zoom input {
  appearance: none;
  width: 86px;
  height: 18px;
  background: linear-gradient(#d3d6d6, #d3d6d6) center / 100% 3px no-repeat;
}
.zoom input::-webkit-slider-thumb {
  appearance: none;
  width: 10px;
  height: 17px;
  background: #0078d7;
  clip-path: polygon(0 0, 100% 0, 100% 70%, 50% 100%, 0 70%);
}
```
